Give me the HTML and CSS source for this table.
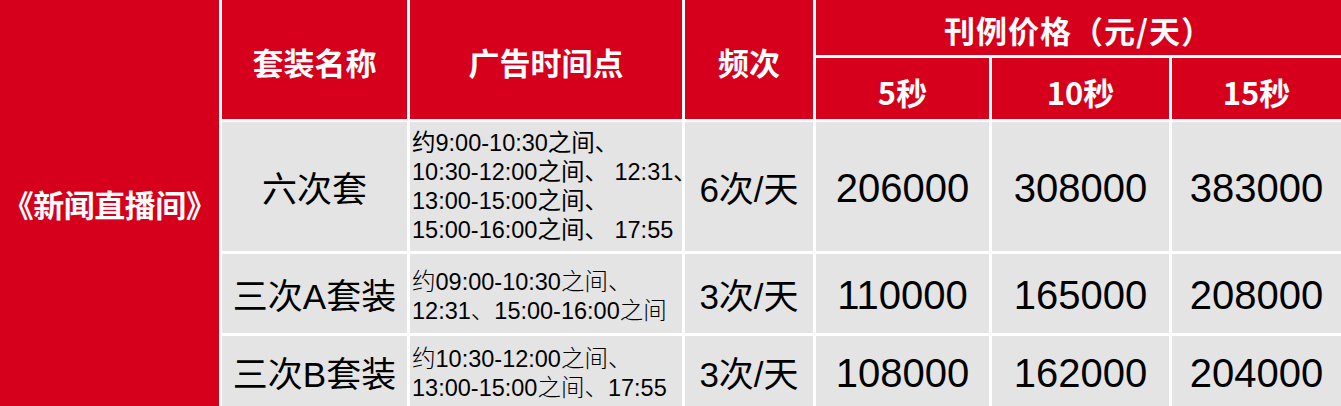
FILE: index.html
```html
<!DOCTYPE html>
<html lang="zh-CN">
<head>
<meta charset="utf-8">
<title>新闻直播间 刊例价格</title>
<link rel="stylesheet" href="styles.css">
</head>
<body>
<div class="table">
  <div class="cell program">《新闻直播间》</div>
  <div class="cell head h-name">套装名称</div>
  <div class="cell head h-time">广告时间点</div>
  <div class="cell head h-freq">频次</div>
  <div class="cell head h-price">刊例价格（元/天）</div>
  <div class="cell head h-s5">5秒</div>
  <div class="cell head h-s10">10秒</div>
  <div class="cell head h-s15">15秒</div>

  <div class="cell body name">六次套</div>
  <div class="cell body time time-yh">
    <span class="line">约9:00-10:30之间、</span>
    <span class="line">10:30-12:00之间、 12:31、</span>
    <span class="line">13:00-15:00之间、</span>
    <span class="line">15:00-16:00之间、 17:55</span>
  </div>
  <div class="cell body freq">6次/天</div>
  <div class="cell body num">206000</div>
  <div class="cell body num">308000</div>
  <div class="cell body num">383000</div>

  <div class="cell body name">三次A套装</div>
  <div class="cell body time time-ss">
    <span class="line">约09:00-10:30之间、</span>
    <span class="line">12:31、15:00-16:00之间</span>
  </div>
  <div class="cell body freq">3次/天</div>
  <div class="cell body num">110000</div>
  <div class="cell body num">165000</div>
  <div class="cell body num">208000</div>

  <div class="cell body name">三次B套装</div>
  <div class="cell body time time-ss">
    <span class="line">约10:30-12:00之间、</span>
    <span class="line">13:00-15:00之间、17:55</span>
  </div>
  <div class="cell body freq">3次/天</div>
  <div class="cell body num">108000</div>
  <div class="cell body num">162000</div>
  <div class="cell body num">204000</div>
</div>
</body>
</html>
```
FILE: styles.css
```css
html, body {
  margin: 0;
  padding: 0;
  background: #ffffff;
}

.table {
  display: grid;
  grid-template-columns: 219px 185px 272px 128px 173px 177px 1fr;
  grid-template-rows: 55px 61px 129px 79px 70px;
  gap: 3px;
  width: 1341px;
  background: #ffffff;
  font-family: "Noto Sans CJK SC", sans-serif;
}

.cell {
  display: flex;
  align-items: center;
  justify-content: center;
  white-space: nowrap;
}

.program {
  grid-column: 1;
  grid-row: 1 / 6;
  background: #d7001c;
  color: #ffffff;
  font-weight: 700;
  font-size: 31px;
  letter-spacing: -0.5px;
}

.head {
  background: #d7001c;
  color: #ffffff;
  font-weight: 700;
  font-size: 31px;
}

.h-name { grid-column: 2; grid-row: 1 / 3; padding-top: 4px; }
.h-time { grid-column: 3; grid-row: 1 / 3; padding-top: 4px; }
.h-freq { grid-column: 4; grid-row: 1 / 3; padding-top: 4px; }
.h-price { grid-column: 5 / 8; grid-row: 1; padding-top: 4px; letter-spacing: 1px; }
.h-s5 { grid-column: 5; grid-row: 2; padding-top: 6px; }
.h-s10 { grid-column: 6; grid-row: 2; padding-top: 6px; }
.h-s15 { grid-column: 7; grid-row: 2; padding-top: 6px; }

.body {
  background: #e4e4e4;
  color: #000000;
}

.name {
  font-family: "Liberation Sans", "Noto Sans CJK SC", sans-serif;
  font-size: 35px;
  font-weight: 400;
}

.freq {
  font-family: "Liberation Sans", "Noto Sans CJK SC", sans-serif;
  font-size: 35px;
}

.num {
  font-family: "Liberation Sans", sans-serif;
  font-size: 40px;
  padding-top: 4px;
}

.time {
  flex-direction: column;
  align-items: flex-start;
  justify-content: center;
  padding-left: 2px;
}

.line {
  display: block;
  height: 29px;
  line-height: 29px;
}

.time-yh {
  font-family: "Liberation Sans", "Noto Sans CJK SC", sans-serif;
  font-size: 23.5px;
}

.time-ss {
  font-family: "Liberation Sans", "Noto Sans CJK SC", sans-serif;
  font-weight: 300;
  font-size: 23.5px;
  padding-top: 6px;
}
```
